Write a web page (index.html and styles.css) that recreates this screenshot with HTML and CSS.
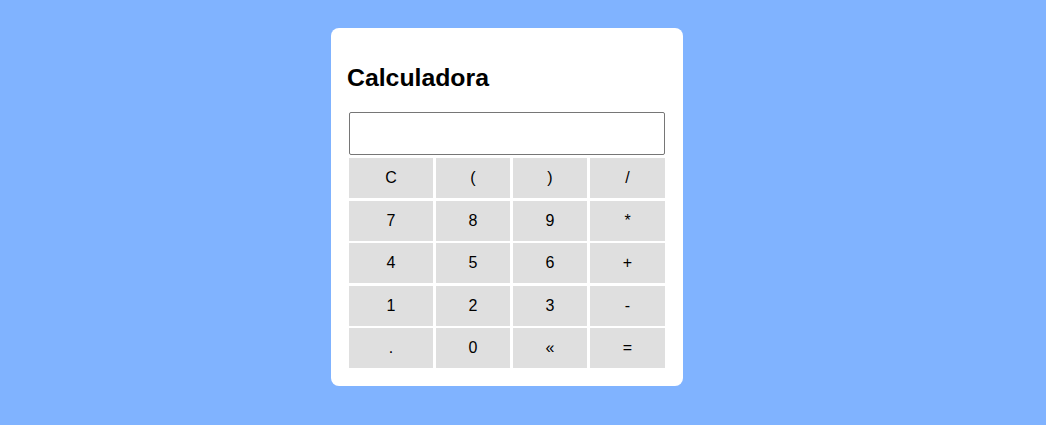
FILE: index.html
```html
<!DOCTYPE html>
<html lang="pt">
<head>
<meta charset="utf-8">
<title>Calculadora</title>
<link rel="stylesheet" href="styles.css">
</head>
<body>
<div class="card">
  <h2 class="title">Calculadora</h2>
  <div class="calc">
    <input class="display" type="text">
    <div class="keys">
      <button class="key">C</button>
      <button class="key">(</button>
      <button class="key">)</button>
      <button class="key">/</button>
      <button class="key">7</button>
      <button class="key">8</button>
      <button class="key">9</button>
      <button class="key">*</button>
      <button class="key">4</button>
      <button class="key">5</button>
      <button class="key">6</button>
      <button class="key">+</button>
      <button class="key">1</button>
      <button class="key">2</button>
      <button class="key">3</button>
      <button class="key">-</button>
      <button class="key">.</button>
      <button class="key">0</button>
      <button class="key">&laquo;</button>
      <button class="key">=</button>
    </div>
  </div>
</div>
</body>
</html>
```

FILE: styles.css
```css
html, body {
  height: 100%;
}
body {
  margin: 0;
  background: #80b3ff;
  font-family: "Liberation Sans", Arial, sans-serif;
  display: flex;
  justify-content: center;
  align-items: flex-start;
  padding: 28px 32px 0 0;
  box-sizing: border-box;
}
.card {
  background: #ffffff;
  border-radius: 8px;
  width: 352px;
  box-sizing: border-box;
  padding: 16px 18px 18px 16px;
}
.title {
  margin: 20px 0 21px 0;
  font-size: 24.8px;
  font-weight: bold;
  color: #000;
  line-height: 27px;
}
.calc {
  margin-left: 2px;
  display: flex;
  flex-direction: column;
  gap: 3px;
}
.display {
  display: block;
  width: 316px;
  height: 43px;
  box-sizing: border-box;
  margin: 0;
  border: 1px solid #767676;
  border-radius: 2px;
  background: #fff;
  padding: 2px 4px;
  font-family: inherit;
  font-size: 16px;
}
.keys {
  display: grid;
  grid-template-columns: 84px 74px 74px 75px;
  grid-auto-rows: 40px;
  column-gap: 3px;
  row-gap: 2.5px;
}
.key {
  margin: 0;
  border: none;
  background: #dfdfdf;
  font-family: inherit;
  font-size: 16px;
  color: #000;
  padding: 0;
  cursor: pointer;
}
```
